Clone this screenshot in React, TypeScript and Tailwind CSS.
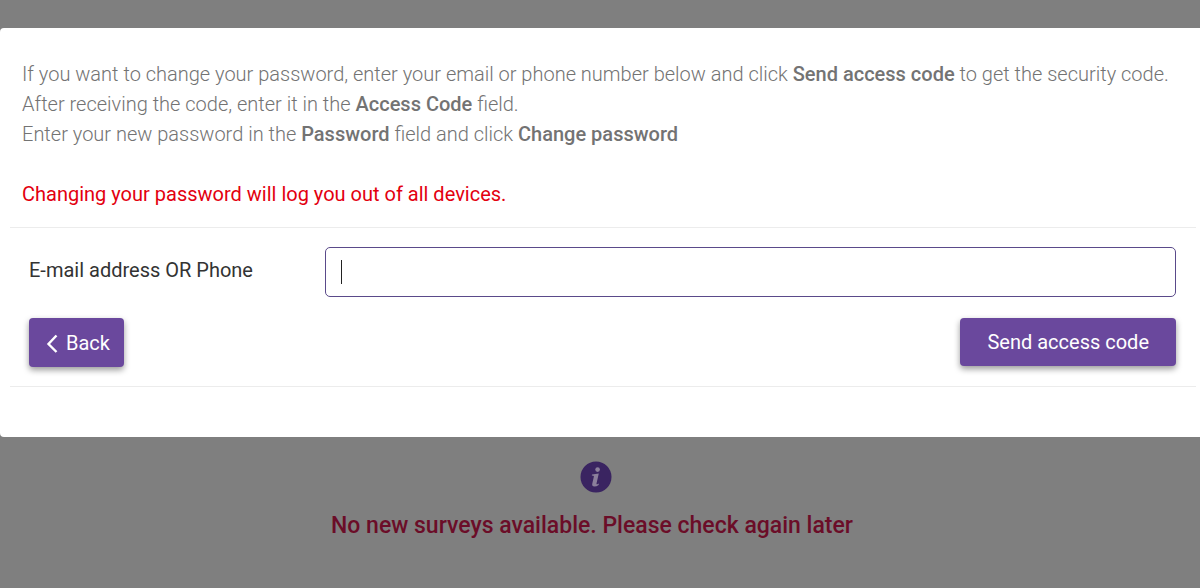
import React, { useState } from 'react'

interface ResetFormProps {
  onBack: () => void
  onSend: (contact: string) => void
}

function InfoIcon() {
  return (
    <svg viewBox="0 0 32 32" className="ml-[7px] size-8" aria-hidden="true">
      <circle cx="16" cy="16" r="15.5" fill="#3a2461" />
      <g fill="#8b7f9b">
        <circle cx="17.6" cy="8.6" r="2.3" />
        <path d="M12 13.6 18.8 12.6 16.5 22.4Q16.3 23.6 17.4 23.2L18.9 22.5 18.6 23.9Q16.6 25.6 14.4 25.6 11.6 25.6 12.3 22.6L13.9 15.6Q14.1 14.7 13.1 14.7L11.8 14.6Z" />
      </g>
    </svg>
  )
}

function Instructions() {
  return (
    <div className="px-3 text-xl leading-[30px]">
      <p className="font-light text-[#737373]">
        If you want to change your password, enter your email or phone number
        below and click <b className="font-medium">Send access code</b> to get
        the security code.
        <br />
        After receiving the code, enter it in the{' '}
        <b className="font-medium">Access Code</b> field.
        <br />
        Enter your new password in the{' '}
        <b className="font-medium">Password</b> field and click{' '}
        <b className="font-medium">Change password</b>
      </p>
      <p className="mt-[30px] text-[#e3000f]">
        Changing your password will log you out of all devices.
      </p>
    </div>
  )
}

function ResetForm({ onBack, onSend }: ResetFormProps) {
  const [contact, setContact] = useState('')

  const handleSubmit = (e: React.FormEvent) => {
    e.preventDefault()
    onSend(contact)
  }

  return (
    <form
      onSubmit={handleSubmit}
      className="mt-[18px] border-y border-[#ececec] pt-[19px] pr-5 pb-[19px] pl-[19px] text-xl"
    >
      {/* Contact field */}
      <div className="flex items-center">
        <label htmlFor="contact" className="w-[296px] shrink-0 pb-1 text-[#333333]">
          E-mail address OR Phone
        </label>
        <div className="relative flex-1">
          <input
            id="contact"
            type="text"
            value={contact}
            onChange={(e) => setContact(e.target.value)}
            className="block h-[50px] w-full rounded-[5px] border border-[#5a4a8a] px-4 text-[#333333] caret-transparent outline-none"
          />
          {!contact && (
            <span className="pointer-events-none absolute top-[13px] left-4 h-6 w-px bg-[#222222]" />
          )}
        </div>
      </div>

      {/* Actions */}
      <div className="mt-[21px] flex items-start justify-between">
        <button
          type="button"
          onClick={onBack}
          className="flex h-[49px] items-center gap-2 rounded-[4px] bg-[#6a489d] pr-[14px] pl-[17px] text-white shadow-[0_3px_6px_rgba(0,0,0,0.4)]"
        >
          <svg
            viewBox="0 0 12 20"
            className="h-5 w-3"
            fill="none"
            stroke="currentColor"
            strokeWidth="2.4"
            aria-hidden="true"
          >
            <path d="M10.5 2.5 2.5 11l8 8" />
          </svg>
          Back
        </button>
        <button
          type="submit"
          className="h-12 rounded-[4px] bg-[#6a489d] px-[27px] text-white shadow-[0_3px_6px_rgba(0,0,0,0.4)]"
        >
          Send access code
        </button>
      </div>
    </form>
  )
}

export default function App() {
  const [sentTo, setSentTo] = useState('')

  return (
    <div className="min-h-screen bg-[#7f7f7f] pt-7 font-['Roboto',sans-serif]">
      <section
        aria-label="Change password"
        data-sent-to={sentTo}
        className="rounded-l-[4px] bg-white pt-[31px] pr-1 pb-[50px] pl-[10px]"
      >
        <Instructions />
        <ResetForm onBack={() => setSentTo('')} onSend={setSentTo} />
      </section>

      {/* Dimmed page content under the dialog */}
      <div className="flex flex-col items-center pt-6 pr-4 text-center">
        <InfoIcon />
        <p className="mt-[17px] text-[23px] leading-8 font-medium text-[#6b0d28]">
          No new surveys available. Please check again later
        </p>
      </div>
    </div>
  )
}
